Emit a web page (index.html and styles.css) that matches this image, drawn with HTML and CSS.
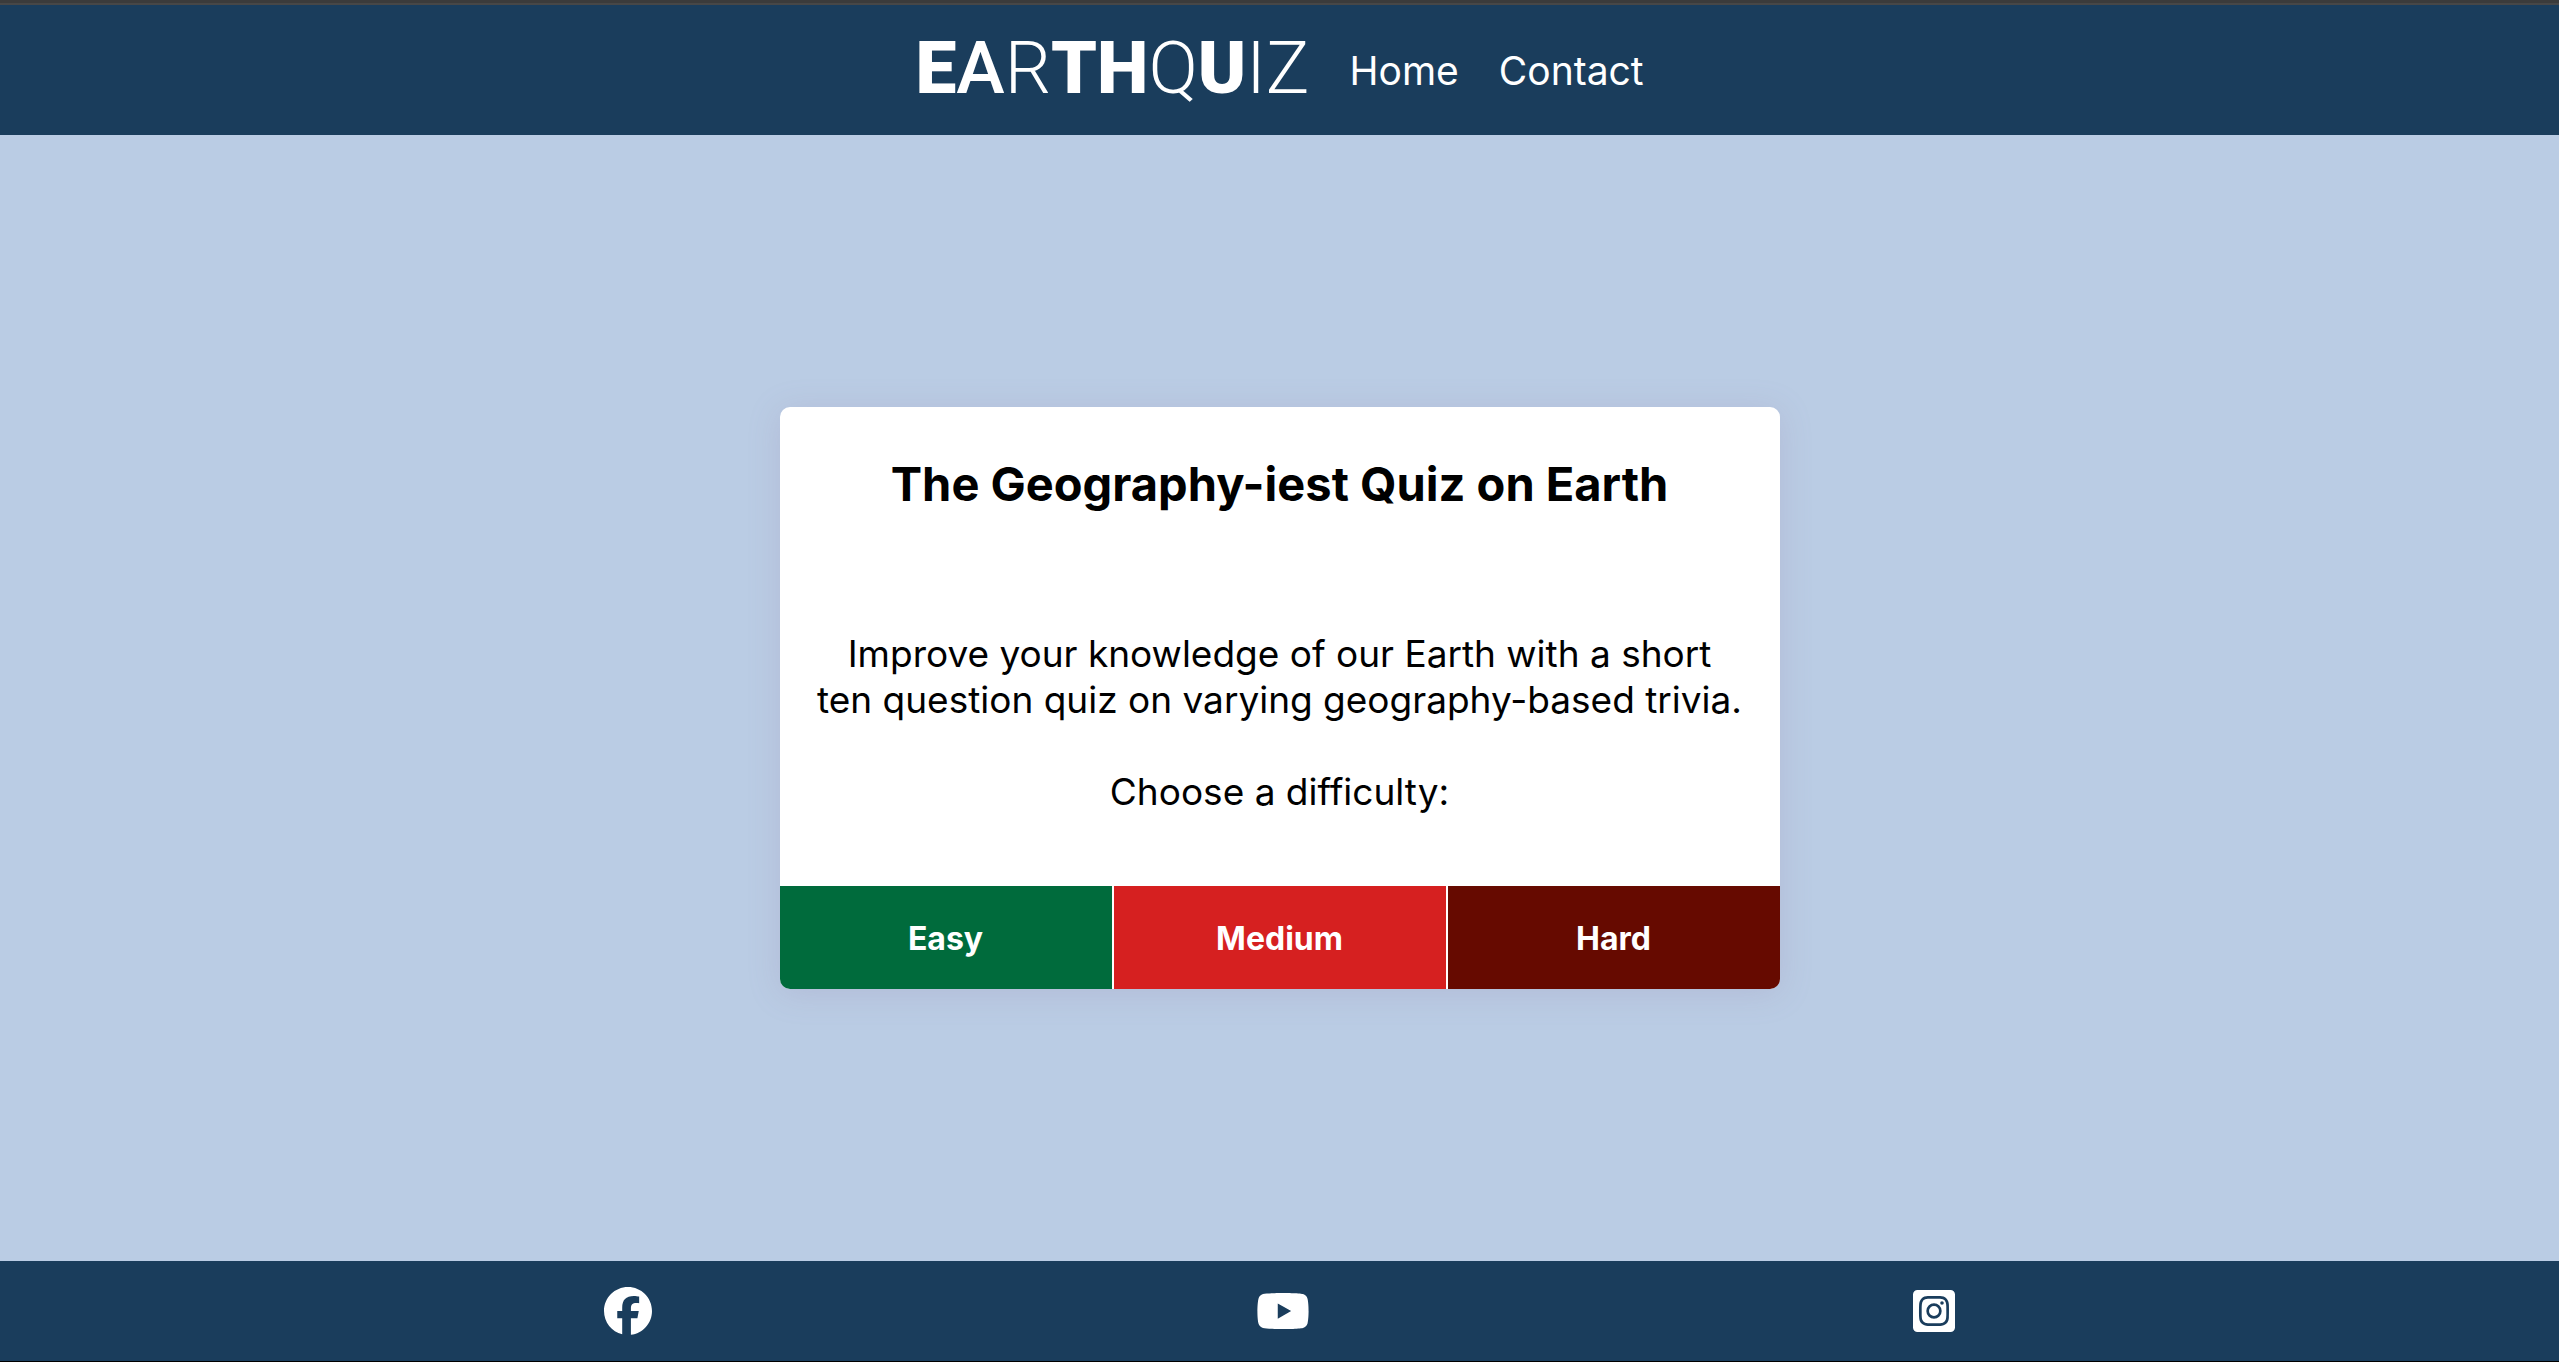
FILE: index.html
```html
<!DOCTYPE html>
<html lang="en">
<head>
<meta charset="utf-8">
<title>EarthQuiz</title>
<meta name="viewport" content="width=device-width, initial-scale=1">
<link rel="stylesheet" href="styles.css">
</head>
<body>
<header class="site-header">
  <a class="logo" href="#" aria-label="EarthQuiz"><span class="heavy">E</span><span class="medium-weight">A</span><span class="light">R</span><span class="heavy">TH</span><span class="light">Q</span><span class="heavy">U</span><span class="light">IZ</span></a>
  <nav class="site-nav">
    <a href="#">Home</a>
    <a href="#">Contact</a>
  </nav>
</header>
<main class="site-main">
  <section class="card">
    <h1 class="card-title">The Geography-iest Quiz on Earth</h1>
    <div class="card-text">
      <p>Improve your knowledge of our Earth with a short<br>ten question quiz on varying geography-based trivia.</p>
      <p>Choose a difficulty:</p>
    </div>
    <div class="levels">
      <button class="level easy" type="button">Easy</button>
      <button class="level medium" type="button">Medium</button>
      <button class="level hard" type="button">Hard</button>
    </div>
  </section>
</main>
<footer class="site-footer">
  <a href="#" aria-label="Facebook"><svg class="icon" width="48" height="48" viewBox="0 0 512 512"><path d="M512 256C512 114.600 397.400 0 256 0S0 114.600 0 256c0 120 82.700 220.800 194.200 248.500V334.200h-52.800V256h52.800v-33.700c0-87.100 39.400-127.500 125-127.500 16.200 0 44.200 3.200 55.700 6.400V172c-6-.600-16.500-1-29.600-1-42 0-58.200 15.900-58.200 57.200V256h83.600l-14.400 78.200h-69.300v175.900C413.800 494.800 512 386.900 512 256z"/></svg></a>
  <a href="#" aria-label="YouTube"><svg class="icon" width="54" height="48" viewBox="0 0 576 512"><path d="M549.655 124.083c-6.281-23.650-24.787-42.276-48.284-48.597C458.781 64 288 64 288 64S117.220 64 74.629 75.486c-23.497 6.322-42.003 24.947-48.284 48.597-11.412 42.867-11.412 132.305-11.412 132.305s0 89.438 11.412 132.305c6.281 23.650 24.787 41.500 48.284 47.821C117.220 448 288 448 288 448s170.780 0 213.371-11.486c23.497-6.321 42.003-24.171 48.284-47.821 11.412-42.867 11.412-132.305 11.412-132.305s0-89.438-11.412-132.305zm-317.510 213.508V175.185l142.739 81.205-142.739 81.201z"/></svg></a>
  <a href="#" aria-label="Instagram"><svg class="icon" width="42" height="48" viewBox="0 0 448 512"><path d="M224 202.660A53.340 53.340 0 1 0 277.360 256 53.380 53.380 0 0 0 224 202.660zm124.710-41a54 54 0 0 0-30.410-30.410c-21-8.290-71-6.430-94.300-6.430s-73.250-1.930-94.310 6.430a54 54 0 0 0-30.410 30.410c-8.280 21-6.430 71.050-6.430 94.330s-1.850 73.270 6.470 94.340a54 54 0 0 0 30.410 30.410c21 8.290 71 6.430 94.310 6.430s73.240 1.930 94.300-6.430a54 54 0 0 0 30.410-30.410c8.350-21 6.430-71.050 6.430-94.330s1.920-73.260-6.430-94.330zM224 338a82 82 0 1 1 82-82 81.900 81.900 0 0 1-82 82zm85.380-148.300a19.140 19.140 0 1 1 19.130-19.140 19.100 19.100 0 0 1-19.090 19.180zM400 32H48A48 48 0 0 0 0 80v352a48 48 0 0 0 48 48h352a48 48 0 0 0 48-48V80a48 48 0 0 0-48-48zm-17.120 290c-1.290 25.630-7.140 48.340-25.850 67s-41.400 24.630-67 25.850c-26.410 1.490-105.590 1.490-132 0-25.630-1.290-48.260-7.150-67-25.850s-24.630-41.420-25.850-67c-1.490-26.420-1.490-105.610 0-132 1.290-25.630 7.070-48.340 25.850-67s41.470-24.560 67-25.780c26.410-1.490 105.590-1.490 132 0 25.630 1.290 48.330 7.150 67 25.850s24.630 41.420 25.850 67.050c1.490 26.320 1.490 105.440 0 131.880z"/></svg></a>
</footer>
</body>
</html>
```
FILE: styles.css
```css
* {
  box-sizing: border-box;
}

body {
  margin: 0;
  min-height: 100vh;
  display: flex;
  flex-direction: column;
  border-top: 3px solid #3b3b3b;
  border-bottom: 1px solid #000;
  background: #bacce4;
  color: #000;
  font-family: Inter, sans-serif;
}

a {
  color: #fff;
  text-decoration: none;
}

.site-header {
  height: 132px;
  display: flex;
  justify-content: center;
  align-items: center;
  gap: 40px;
  border-top: 2px solid #474747;
  background: #1a3d5c;
}

.logo {
  padding-bottom: 4px;
  font-family: Roboto, sans-serif;
  font-size: 73px;
  line-height: 80px;
}

.light {
  font-weight: 300;
}

.medium-weight {
  font-weight: 500;
}

.heavy {
  font-weight: 900;
}

.site-nav {
  display: flex;
  gap: 40px;
  padding-top: 2px;
  font-size: 39px;
  line-height: 48px;
}

.site-main {
  flex: 1;
  display: flex;
  justify-content: center;
  align-items: center;
}

.card {
  width: 1000px;
  max-width: 100%;
  border-radius: 10px;
  overflow: hidden;
  background: #fff;
  box-shadow: 0 4px 32px rgba(149, 129, 168, 0.22);
  text-align: center;
}

.card-title {
  margin: 0;
  padding: 48px 20px 96px;
  font-size: 47px;
  line-height: 58px;
}

.card-text {
  padding: 22px 20px 71px;
  font-size: 37px;
  line-height: 46px;
}

.card-text p {
  margin: 0 0 46px;
}

.card-text p:last-child {
  margin: 0;
}

.levels {
  display: grid;
  grid-template-columns: repeat(3, 1fr);
  gap: 2px;
}

.level {
  height: 103px;
  padding: 2px 0 0;
  border: 0;
  color: #fff;
  font: 700 32px/40px Inter, sans-serif;
  cursor: pointer;
}

.easy {
  background: #006b3c;
}

.medium {
  background: #d62020;
}

.hard {
  background: #660a00;
}

.site-footer {
  height: 100px;
  display: flex;
  justify-content: space-evenly;
  align-items: center;
  background: #1a3d5c;
}

.icon {
  display: block;
  fill: #fff;
}
```
